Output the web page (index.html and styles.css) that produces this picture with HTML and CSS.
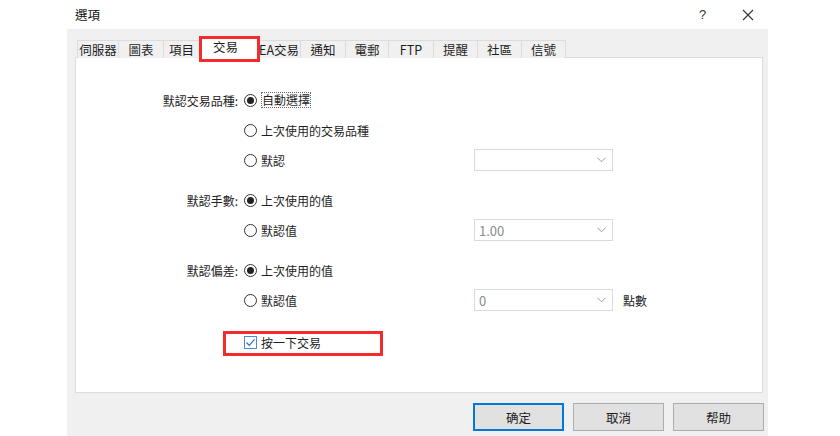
FILE: index.html
```html
<!DOCTYPE html>
<html lang="zh-Hant">
<head>
<meta charset="utf-8">
<link rel="stylesheet" href="styles.css">
</head>
<body>
<div class="titlebar">
  <span class="title">選項</span>
  <span class="help">?</span>
  <span class="close"><svg width="12" height="12" viewBox="0 0 12 12"><path d="M1 1L11 11M11 1L1 11" stroke="#333" stroke-width="1.1" fill="none"/></svg></span>
</div>
<div class="dialog">
  <div class="tabs">
    <div class="tab w42">伺服器</div>
    <div class="tab w45">圖表</div>
    <div class="tab w36">項目</div>
    <div class="tab active">交易<span class="mark mark-tab"></span></div>
    <div class="tab w43">EA交易</div>
    <div class="tab w45">通知</div>
    <div class="tab w43">電郵</div>
    <div class="tab w45">FTP</div>
    <div class="tab w44">提醒</div>
    <div class="tab w44">社區</div>
    <div class="tab w44">信號</div>
  </div>
  <div class="panel">
    <div class="group first">
      <div class="row">
        <span class="label">默認交易品種:</span>
        <span class="opt"><span class="radio on"></span><span class="focus">自動選擇</span></span>
      </div>
      <div class="row">
        <span class="label"></span>
        <span class="opt"><span class="radio"></span>上次使用的交易品種</span>
      </div>
      <div class="row">
        <span class="label"></span>
        <span class="opt"><span class="radio"></span>默認</span>
        <span class="combo"><span class="val"></span><svg class="chev" width="9" height="6" viewBox="0 0 9 6"><path d="M0.5 0.8L4.5 4.8L8.5 0.8" stroke="#9a9a9a" fill="none"/></svg></span>
      </div>
    </div>
    <div class="group">
      <div class="row">
        <span class="label">默認手數:</span>
        <span class="opt"><span class="radio on"></span>上次使用的值</span>
      </div>
      <div class="row">
        <span class="label"></span>
        <span class="opt"><span class="radio"></span>默認值</span>
        <span class="combo"><span class="val">1.00</span><svg class="chev" width="9" height="6" viewBox="0 0 9 6"><path d="M0.5 0.8L4.5 4.8L8.5 0.8" stroke="#9a9a9a" fill="none"/></svg></span>
      </div>
    </div>
    <div class="group">
      <div class="row">
        <span class="label">默認偏差:</span>
        <span class="opt"><span class="radio on"></span>上次使用的值</span>
      </div>
      <div class="row">
        <span class="label"></span>
        <span class="opt"><span class="radio"></span>默認值</span>
        <span class="combo"><span class="val">0</span><svg class="chev" width="9" height="6" viewBox="0 0 9 6"><path d="M0.5 0.8L4.5 4.8L8.5 0.8" stroke="#9a9a9a" fill="none"/></svg></span>
        <span class="unit">點數</span>
      </div>
    </div>
    <div class="group check-group">
      <div class="row check-row">
        <span class="label"></span>
        <span class="opt"><span class="checkbox"><svg width="11" height="11" viewBox="0 0 11 11"><path d="M1.5 5.5L4.3 8.3L9.5 2.3" stroke="#2b6fcf" stroke-width="1.2" fill="none"/></svg></span>按一下交易</span>
        <span class="mark mark-check"></span>
      </div>
    </div>
  </div>
  <div class="buttons">
    <div class="btn default">确定</div>
    <div class="btn">取消</div>
    <div class="btn">帮助</div>
  </div>
</div>
</body>
</html>
```
FILE: styles.css
```css
* { box-sizing: border-box; }
html, body {
  margin: 0;
  padding: 0;
  background: #ffffff;
}
body {
  width: 840px;
  height: 436px;
  overflow: hidden;
  font-family: "Noto Sans CJK TC", "Noto Sans", sans-serif;
  font-size: 12px;
  color: #1e1e1e;
}
.titlebar {
  height: 29px;
  display: flex;
  align-items: center;
  padding-left: 75px;
}
.title {
  font-size: 12.5px;
  color: #111;
}
.help {
  margin-left: auto;
  width: 12px;
  font-family: "Liberation Sans", sans-serif;
  font-size: 13px;
  color: #333;
  margin-right: 31px;
}
.close {
  display: flex;
  margin-right: 86px;
}
.dialog {
  margin-left: 67px;
  width: 701px;
  height: 407px;
  background: #f0f0f0;
  padding: 7px 5px 0 8px;
}
.tabs {
  display: flex;
  align-items: flex-end;
  height: 22px;
  padding-left: 2px;
  position: relative;
  z-index: 1;
}
.tab {
  height: 18px;
  line-height: 17px;
  border: 1px solid #dcdcdc;
  border-bottom: none;
  margin-left: -1px;
  background: #f0f0f0;
  text-align: center;
  font-size: 12.5px;
  color: #1e1e1e;
  white-space: nowrap;
}
.tab:first-child { margin-left: 0; }
.w36 { width: 37px; }
.w42 { width: 42px; }
.w43 { width: 44px; }
.w44 { width: 45px; }
.w45 { width: 46px; }
.tab.active {
  width: 59px;
  height: 22px;
  line-height: 20px;
  background: #ffffff;
  position: relative;
  padding-right: 6px;
}
.mark {
  position: absolute;
  border: 3px solid #f52a2a;
  pointer-events: none;
}
.mark-tab {
  left: -1px;
  top: -1px;
  width: 61px;
  height: 26px;
}
.panel {
  width: 688px;
  height: 336px;
  margin-top: -1px;
  background: #ffffff;
  border: 1px solid #dcdcdc;
  padding-top: 27px;
}
.group + .group { margin-top: 10px; }
.check-group { margin-top: 12px !important; }
.row {
  display: flex;
  align-items: center;
  height: 30px;
  position: relative;
}
.label {
  width: 162px;
  text-align: right;
  flex: none;
  margin-right: 6px;
  color: #222;
}
.opt {
  width: 230px;
  flex: none;
  display: flex;
  align-items: center;
  color: #1e1e1e;
}
.radio {
  width: 13px;
  height: 13px;
  border: 1px solid #333;
  border-radius: 50%;
  margin-right: 4px;
  display: flex;
  align-items: center;
  justify-content: center;
  flex: none;
}
.radio.on::after {
  content: "";
  width: 7px;
  height: 7px;
  border-radius: 50%;
  background: #222;
}
.focus {
  outline: 1px dotted #666;
  outline-offset: -1px;
  padding: 0 1px;
  line-height: 16px;
}
.combo {
  width: 139px;
  height: 22px;
  flex: none;
  border: 1px solid #dadada;
  background: #fff;
  display: flex;
  align-items: center;
  padding: 0 6px 0 4px;
}
.val {
  flex: 1;
  color: #8a8a8a;
  font-size: 13px;
}
.chev { flex: none; }
.unit {
  margin-left: 10px;
  color: #222;
}
.checkbox {
  width: 13px;
  height: 13px;
  border: 1px solid #4a8ad8;
  margin-right: 4px;
  display: flex;
  align-items: center;
  justify-content: center;
  flex: none;
  background: #fff;
}
.mark-check {
  left: 147px;
  top: 4px;
  width: 160px;
  height: 25px;
}
.buttons {
  display: flex;
  justify-content: flex-end;
  gap: 9px;
  margin-top: 10px;
  margin-right: -1px;
}
.btn {
  width: 91px;
  height: 28px;
  border: 1px solid #adadad;
  background: #e1e1e1;
  display: flex;
  align-items: center;
  justify-content: center;
  color: #1e1e1e;
  font-size: 12.5px;
}
.btn.default {
  border: 1px solid #0078d7;
  box-shadow: inset 0 0 0 1px #0078d7;
}
```
